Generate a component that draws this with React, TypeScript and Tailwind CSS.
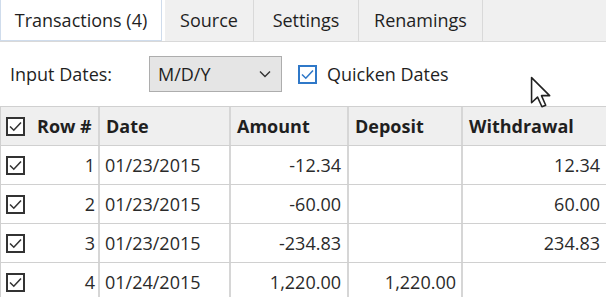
import React from 'react';

const rows = [
  { n: 1, date: '01/23/2015', amount: '-12.34', deposit: '', withdrawal: '12.34' },
  { n: 2, date: '01/23/2015', amount: '-60.00', deposit: '', withdrawal: '60.00' },
  { n: 3, date: '01/23/2015', amount: '-234.83', deposit: '', withdrawal: '234.83' },
  { n: 4, date: '01/24/2015', amount: '1,220.00', deposit: '1,220.00', withdrawal: '' },
];

const cols = 'grid grid-cols-[99px_131px_118px_114px_1fr]';

function Check({ blue = false }: { blue?: boolean }) {
  return (
    <div
      className={`w-[19px] h-[19px] flex items-center justify-center bg-white border-2 ${
        blue ? 'border-[#2f78c8]' : 'border-[#333]'
      }`}
    >
      <svg width="13" height="11" viewBox="0 0 13 11" fill="none">
        <path
          d="M1 5.5 L4.8 9.2 L12 1.5"
          stroke={blue ? '#2f78c8' : '#333'}
          strokeWidth="1.6"
        />
      </svg>
    </div>
  );
}

export default function App() {
  return (
    <div className="relative w-[606px] h-[297px] overflow-hidden bg-white text-[#1f1f1f] font-['Open_Sans',sans-serif] text-[18px]">
      {/* Tabs */}
      <div className="flex h-[42px] border-b border-[#d9d9d9] bg-white">
        <div className="w-[162px] h-[41px] flex items-center justify-center bg-white border border-t-0 border-[#cfdcec] -mb-px">
          Transactions (4)
        </div>
        <div className="ml-[3px] w-[89px] flex items-center justify-center bg-[#f0f0f0] border-r border-[#d9d9d9]">
          Source
        </div>
        <div className="w-[105px] flex items-center justify-center bg-[#f0f0f0] border-r border-[#d9d9d9]">
          Settings
        </div>
        <div className="w-[124px] flex items-center justify-center bg-[#f0f0f0] border-r border-[#d9d9d9]">
          Renamings
        </div>
        <div className="flex-1 bg-[#f0f0f0]" />
      </div>

      {/* Options row */}
      <div className="flex items-center h-[64px] pl-[10px]">
        <span className="w-[139px]">Input Dates:</span>
        <div className="w-[133px] h-[36px] flex items-center justify-between px-[8px] bg-[#e5e5e5] border border-[#adadad]">
          <span>M/D/Y</span>
          <svg width="12" height="8" viewBox="0 0 12 8" fill="none" className="mr-[2px]">
            <path d="M1 1.5 L6 6.5 L11 1.5" stroke="#333" strokeWidth="1.4" />
          </svg>
        </div>
        <div className="ml-[16px]">
          <Check blue />
        </div>
        <span className="ml-[10px]">Quicken Dates</span>
      </div>

      {/* Grid */}
      <div className="border-t border-l border-[#d0d0d0]">
        <div className={`${cols} h-[39px] bg-[#efefef] font-bold border-b border-[#d0d0d0]`}>
          <div className="flex items-center pl-[5px] border-r-2 border-[#d6d6d6]">
            <Check />
            <span className="ml-[12px]">Row #</span>
          </div>
          <div className="flex items-center pl-[6px] border-r-2 border-[#d6d6d6]">Date</div>
          <div className="flex items-center pl-[6px] border-r-2 border-[#d6d6d6]">Amount</div>
          <div className="flex items-center pl-[6px] border-r-2 border-[#d6d6d6]">Deposit</div>
          <div className="flex items-center pl-[6px]">Withdrawal</div>
        </div>
        {rows.map((r) => (
          <div key={r.n} className={`${cols} h-[39px] border-b border-[#d0d0d0] text-[#2a2a2a]`}>
            <div className="flex items-center justify-between pl-[5px] pr-[3px] border-r-2 border-[#d6d6d6]">
              <Check />
              <span>{r.n}</span>
            </div>
            <div className="flex items-center pl-[5px] border-r-2 border-[#d6d6d6]">{r.date}</div>
            <div className="flex items-center justify-end pr-[6px] border-r-2 border-[#d6d6d6]">{r.amount}</div>
            <div className="flex items-center justify-end pr-[5px] border-r-2 border-[#d6d6d6]">{r.deposit}</div>
            <div className="flex items-center justify-end pr-[6px]">{r.withdrawal}</div>
          </div>
        ))}
      </div>

      {/* Mouse pointer */}
      <svg
        className="absolute left-[530px] top-[76px]"
        width="22"
        height="33"
        viewBox="0 0 14 21"
        fill="none"
      >
        <path
          d="M1 1 L1 17 L4.8 13.4 L7.6 19.6 L10 18.6 L7.3 12.5 L12.5 12.5 Z"
          fill="white"
          stroke="#222"
          strokeWidth="1"
          strokeLinejoin="round"
        />
      </svg>
    </div>
  );
}
